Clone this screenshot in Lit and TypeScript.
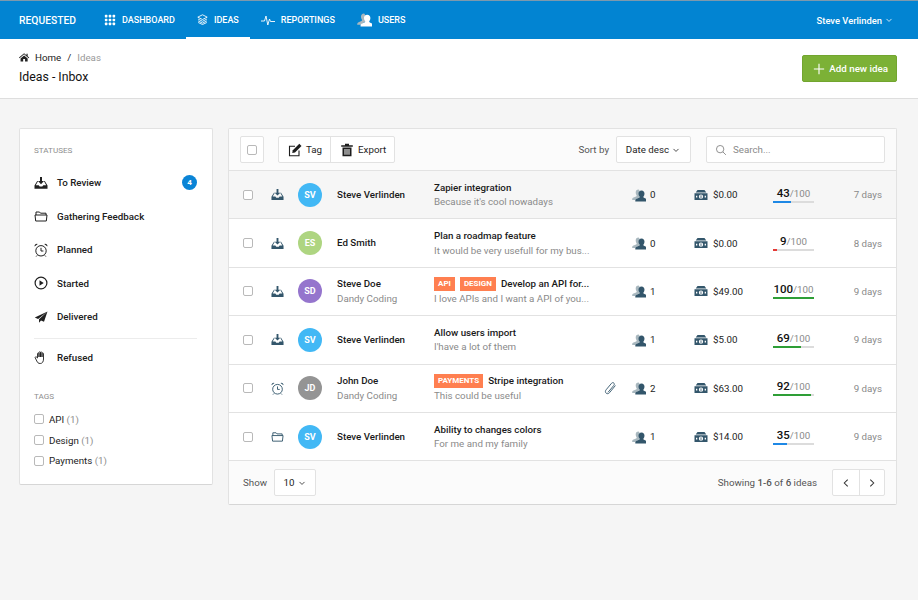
import { LitElement, css, html, svg } from "lit";
import { customElement } from "lit/decorators.js";

const icons = {
  grid: svg`<g fill="currentColor">${[1, 5.5, 10].flatMap((y) =>
    [1, 5.5, 10].map((x) => svg`<rect x=${x} y=${y} width="3" height="3" rx=".8" />`)
  )}</g>`,
  layers: svg`<g fill="none" stroke="currentColor" stroke-width="1.1"><path d="M7 1 13 4 7 7 1 4Z" /><path d="M1.5 6.5 7 9.3l5.500-2.800" /><path d="M1.500 8.800 7 11.600l5.500-2.800" /><path d="M1.500 10.800 7 13.400l5.500-2.600" /></g>`,
  pulse: svg`<path fill="none" stroke="currentColor" stroke-width=".9" d="M0 8h3.500l1.500-5 1.800 9 1.700-6 1 2.500H14" />`,
  user: svg`<path fill="#a9b8bf" d="M6.500 1.500c-1.800 0-2.800 1.200-2.800 3 0 1 .3 2 .9 2.700.2.400 0 1-.5 1.200L1 9.800c-.5.300-.8.800-.8 1.500V12h4.300l1-1.600 2-1.200V2.600c-.3-.7-.8-1.100-1-1.100Z" /><path fill="currentColor" d="M9.500 2.500c-1.900 0-3 1.300-3 3.200 0 1.100.4 2.100 1 2.800.3.500.1 1.100-.5 1.300l-2.700 1.200c-.7.300-1 .9-1 1.500V13.500h12.400v-1c0-.6-.3-1.200-1-1.500L12 9.800c-.6-.2-.8-.8-.5-1.300.6-.7 1-1.700 1-2.800 0-1.900-1.100-3.200-3-3.200Z" />`,
  home: svg`<path fill="currentColor" d="M6.500 1.500 0 7l.7.800L6.500 3l5.800 4.800L13 7l-2-1.700V2.300H9.500v1.700ZM2 8.200V12h3.300V9h2.400v3H11V8.200L6.500 4.400Z" />`,
  inbox: svg`<path fill="currentColor" d="M6 1h2v4h2L7 8.200 4 5h2Z" /><path fill="currentColor" d="M3.200 5h.9L1.800 9.200h2.900l1 1.400h2.600l1-1.400h2.900L9.900 5h.9l2.700 4.400V12.800H.5V9.400Z" />`,
  folder: svg`<path fill="none" stroke="currentColor" stroke-width="1" d="M2 6V3h3.500l1 1.200H12V6M1 6h12l-.7 6H1.700Z" />`,
  clock: svg`<g fill="none" stroke="currentColor" stroke-width="1"><circle cx="7" cy="7.800" r="5.200" /><path d="M7 4.800v3.200h2.400M3.200 12.400l-1 1.100M10.800 12.400l1 1.100" /></g><path fill="currentColor" d="M.6 3.600A2.300 2.300 0 0 1 3.800 1ZM13.400 3.600A2.300 2.300 0 0 0 10.200 1Z" />`,
  play: svg`<circle cx="7" cy="7" r="5.900" fill="none" stroke="currentColor" stroke-width="1.200" /><path fill="currentColor" d="M5.500 4.300 9.700 7l-4.200 2.700Z" />`,
  plane: svg`<path fill="currentColor" d="M13.500 1.500 .8 7.600l3.300 1.300ZM13.500 1.500 5 9.300v3.500l2-2.300 3 1.300Z" />`,
  hand: svg`<path fill="none" stroke="currentColor" stroke-width=".9" stroke-linejoin="round" d="M3.500 8V3.500a.8.800 0 0 1 1.500 0V7 2.300a.8.800 0 0 1 1.500 0V7 2.500a.8.800 0 0 1 1.500 0V7 3.500a.8.800 0 0 1 1.500 0V9c0 2.500-1 4.500-3.300 4.500-2 0-2.700-1-3.400-2.500L1.200 7.800c-.3-.9.800-1.400 1.300-.7Z" />`,
  clip: svg`<path fill="none" stroke="currentColor" stroke-width=".9" stroke-linecap="round" d="M5.200 12.600 10.900 5.800c1.400-1.700-.9-3.800-2.400-2L3.100 10.300c-2.200 2.700 1.300 5.400 3.400 2.900l5.700-6.900" transform="translate(0 -1.500)" />`,
  money: svg`<path fill="currentColor" d="M3.500 2h7l1.800 2.400H1.700ZM.5 5.200h13V12H.5ZM7 6.500a2 2 0 1 0 0 4.300 2 2 0 0 0 0-4.300ZM2 7.800v1.700h1.300V7.800ZM10.700 7.800v1.700H12V7.800Z" fill-rule="evenodd" /><path fill="currentColor" d="M6.600 7.200h.8v3h-.8Z" />`,
  edit: svg`<path fill="none" stroke="currentColor" stroke-width="1.100" d="M11 7.500V12.800H1.500V3.200H7" /><path fill="currentColor" d="M11.300 .8 13.500 3 7 9.500l-2.800.6.600-2.800Z" />`,
  trash: svg`<path fill="currentColor" d="M5 .8h4v1.400h3.800v1.600H1.200V2.200H5ZM2.500 4.600h9V13.200h-9ZM4.500 6v5.800h1V6ZM6.500 6v5.800h1V6ZM8.500 6v5.800h1V6Z" fill-rule="evenodd" />`,
  search: svg`<circle cx="6" cy="6" r="4.300" fill="none" stroke="currentColor" stroke-width="1.100" /><path stroke="currentColor" stroke-width="1.100" d="m9.200 9.200 3.500 3.500" />`,
  plus: svg`<path stroke="currentColor" stroke-width="1.300" d="M7 1v12M1 7h12" />`,
  down: svg`<path fill="none" stroke="currentColor" stroke-width="1.100" d="M3.500 5.500 7 9l3.500-3.500" />`,
  left: svg`<path fill="none" stroke="currentColor" stroke-width="1.200" d="M9 3 5 7l4 4" />`,
  right: svg`<path fill="none" stroke="currentColor" stroke-width="1.200" d="m5 3 4 4-4 4" />`,
};

type IconName = keyof typeof icons;

function icon(name: IconName, size = 14) {
  return html`<svg class="icon" width=${size} height=${size} viewBox="0 0 14 14">${icons[name]}</svg>`;
}

const navItems: { label: string; icon: IconName; size: number; active?: boolean }[] = [
  { label: "DASHBOARD", icon: "grid", size: 12 },
  { label: "IDEAS", icon: "layers", size: 11, active: true },
  { label: "REPORTINGS", icon: "pulse", size: 14 },
  { label: "USERS", icon: "user", size: 15 },
];

const statuses: { label: string; icon: IconName; count?: number }[] = [
  { label: "To Review", icon: "inbox", count: 4 },
  { label: "Gathering Feedback", icon: "folder" },
  { label: "Planned", icon: "clock" },
  { label: "Started", icon: "play" },
  { label: "Delivered", icon: "plane" },
];

const tags = ["API", "Design", "Payments"];

interface Idea {
  status: IconName;
  initials: string;
  color: string;
  name: string;
  company?: string;
  tags?: string[];
  title: string;
  text: string;
  clip?: boolean;
  voters: number;
  amount: string;
  score: number;
  barColor: string;
  age: string;
  hover?: boolean;
}

const ideas: Idea[] = [
  { status: "inbox", initials: "SV", color: "#42b8f5", name: "Steve Verlinden", title: "Zapier integration", text: "Because it's cool nowadays", voters: 0, amount: "$0.00", score: 43, barColor: "#1e88e5", age: "7 days", hover: true },
  { status: "inbox", initials: "ES", color: "#aed581", name: "Ed Smith", title: "Plan a roadmap feature", text: "It would be very usefull for my bus...", voters: 0, amount: "$0.00", score: 9, barColor: "#e53935", age: "8 days" },
  { status: "inbox", initials: "SD", color: "#9575cd", name: "Steve Doe", company: "Dandy Coding", tags: ["API", "DESIGN"], title: "Develop an API for...", text: "I love APIs and I want a API of you...", voters: 1, amount: "$49.00", score: 100, barColor: "#2e9e36", age: "9 days" },
  { status: "inbox", initials: "SV", color: "#42b8f5", name: "Steve Verlinden", title: "Allow users import", text: "I'have a lot of them", voters: 1, amount: "$5.00", score: 69, barColor: "#2e9e36", age: "9 days" },
  { status: "clock", initials: "JD", color: "#949494", name: "John Doe", company: "Dandy Coding", tags: ["PAYMENTS"], title: "Stripe integration", text: "This could be useful", clip: true, voters: 2, amount: "$63.00", score: 92, barColor: "#2e9e36", age: "9 days" },
  { status: "folder", initials: "SV", color: "#42b8f5", name: "Steve Verlinden", title: "Ability to changes colors", text: "For me and my family", voters: 1, amount: "$14.00", score: 35, barColor: "#1e88e5", age: "9 days" },
];

@customElement("app-root")
export class AppRoot extends LitElement {
  static styles = css`
    * {
      box-sizing: border-box;
    }

    :host {
      display: block;
      min-height: 600px;
      background: #f5f5f5;
      color: #1d1d1d;
      font-family: Roboto, sans-serif;
      font-size: 9.750px;
    }

    .icon {
      display: block;
      flex: none;
    }

    .topbar {
      display: flex;
      align-items: center;
      height: 39px;
      padding: 0 24px 0 19px;
      background: #0284d2;
      border-top: 1px solid #7d99ad;
      color: #fff;
    }

    .brand {
      width: 62px;
      font-size: 10.300px;
      font-weight: 500;
    }

    .nav {
      display: flex;
      align-self: stretch;
      flex: 1;
      margin-left: 12px;
    }

    .nav a {
      display: flex;
      align-items: center;
      gap: 6px;
      padding: 0 11px;
      font-size: 9px;
      font-weight: 500;
    }

    .nav a.active {
      border-bottom: 2px solid #fff;
      padding-top: 2px;
    }

    .nav a .icon {
      margin-top: -1px;
    }

    .account {
      display: flex;
      align-items: center;
      gap: 2px;
      font-size: 9.400px;
      font-weight: 500;
    }

    .pagehead {
      display: flex;
      justify-content: space-between;
      align-items: center;
      height: 60px;
      padding: 0 21px 0 19px;
      background: #fff;
      border-bottom: 1px solid #dedede;
    }

    .crumbs {
      display: flex;
      align-items: center;
      gap: 4px;
      color: #222;
    }

    .crumbs .icon {
      margin-right: 1px;
    }

    .crumbs .sep {
      margin: 0 2px;
    }

    .crumbs .now {
      color: #999;
    }

    h1 {
      margin: 6px 0 0;
      font-size: 12.300px;
      line-height: 16px;
      font-weight: 400;
      color: #111;
    }

    .add {
      display: flex;
      align-items: center;
      gap: 4px;
      height: 27px;
      padding: 0 8px 0 10px;
      background: #7cb136;
      border: 1px solid #72a52f;
      border-radius: 2px;
      color: #fff;
      font-weight: 500;
    }

    .add .icon {
      width: 12px;
      height: 12px;
    }

    .content {
      display: flex;
      align-items: flex-start;
      gap: 15px;
      padding: 29px 21px 0 19px;
    }

    .card {
      background: #fff;
      border: 1px solid #e2e2e2;
      border-bottom-color: #d6d6d6;
      border-radius: 2px;
    }

    .side {
      width: 194px;
      height: 357px;
      padding: 16px 15px 0 14px;
    }

    .side h4 {
      margin: 0;
      font-size: 8.100px;
      line-height: 10px;
      font-weight: 400;
      color: #8d8d8d;
    }

    .status {
      display: flex;
      align-items: center;
      height: 33.500px;
      font-weight: 500;
      color: #202020;
    }

    .status .icon {
      margin-right: 9px;
      width: 14px;
    }

    .status span {
      flex: 1;
    }

    .statuses {
      margin-top: 11px;
    }

    .count {
      display: grid;
      place-items: center;
      flex: none;
      width: 15px;
      height: 15px;
      border-radius: 50%;
      background: #0a84d6;
      color: #fff;
      font-size: 8px;
      font-weight: 700;
    }

    .rule {
      margin-top: 4px;
      border-top: 1px solid #ececec;
    }

    .refused {
      margin-top: 2px;
    }

    .side .tags-head {
      margin-top: 17px;
    }

    .tag-opts {
      margin-top: 8px;
    }

    .tag-opt {
      display: flex;
      align-items: center;
      gap: 5px;
      height: 20.700px;
      color: #222;
    }

    .tag-opt em {
      font-style: normal;
      color: #8d8d8d;
    }

    .box {
      flex: none;
      width: 10px;
      height: 10px;
      background: #fff;
      border: 1px solid #b9b9b9;
      border-radius: 2px;
    }

    .main {
      display: flex;
      flex-direction: column;
      flex: 1;
      height: 377px;
    }

    .toolbar {
      display: flex;
      align-items: center;
      flex: none;
      height: 42px;
      padding: 0 11px;
      background: #fbfbfb;
      border-bottom: 1px solid #e2e2e2;
    }

    .btn {
      display: flex;
      align-items: center;
      height: 27px;
      background: #fff;
      border: 1px solid #e2e2e2;
      border-radius: 2px;
    }

    .select-all {
      justify-content: center;
      width: 24px;
      margin-right: 14px;
    }

    .group .part {
      display: flex;
      align-items: center;
      gap: 4px;
      height: 100%;
      padding: 0 8px 0 9px;
    }

    .group .part + .part {
      border-left: 1px solid #e2e2e2;
    }

    .sort-label {
      margin-left: auto;
      margin-right: 7px;
      color: #555;
    }

    .sort {
      justify-content: center;
      gap: 2px;
      width: 75px;
      margin-right: 15px;
    }

    .search {
      gap: 6px;
      width: 179px;
      padding-left: 8px;
      color: #8a8a8a;
    }

    .row {
      display: grid;
      flex: none;
      grid-template-columns: 28px 27px 39px 97px 169px 29px 62px 79px 1fr;
      align-items: center;
      height: 48.400px;
      padding: 0 14px;
      border-bottom: 1px solid #e2e2e2;
    }

    .row.hover {
      background: #f6f6f6;
    }

    .state {
      color: #33566b;
    }

    .avatar {
      display: grid;
      place-items: center;
      width: 24px;
      height: 24px;
      border-radius: 50%;
      color: #fff;
      font-size: 9px;
      font-weight: 700;
    }

    .name {
      line-height: 12px;
      font-weight: 500;
      color: #1a1a1a;
    }

    .sub {
      margin-top: 3px;
      line-height: 12px;
      color: #8a8a8a;
      font-weight: 400;
      white-space: nowrap;
    }

    .title {
      display: flex;
      align-items: center;
      height: 12px;
      font-weight: 500;
      color: #1a1a1a;
      white-space: nowrap;
    }

    .pill {
      margin-right: 5px;
      padding: 0 4px;
      height: 14px;
      line-height: 14px;
      background: #ff7f50;
      color: #fff;
      font-size: 8px;
      font-weight: 700;
    }

    .clip,
    .voters,
    .money {
      color: #33566b;
    }

    .voters,
    .money {
      display: flex;
      align-items: center;
      gap: 4px;
    }

    .money {
      gap: 5px;
    }

    .voters span,
    .money span {
      color: #222;
    }

    .score {
      display: grid;
      grid-template-columns: 41px 1fr;
      align-items: center;
    }

    .points {
      text-align: center;
      line-height: 13px;
      color: #8a8a8a;
    }

    .points b {
      font-size: 11.500px;
      font-weight: 500;
      color: #111;
    }

    .track {
      height: 2px;
      margin-top: 1px;
      background: #dcdcdc;
    }

    .track div {
      height: 100%;
    }

    .age {
      text-align: right;
      color: #8a8a8a;
    }

    .footer {
      display: flex;
      align-items: center;
      flex: 1;
      padding: 0 11px 0 14px;
      background: #fbfbfb;
      color: #555;
    }

    .limit {
      justify-content: center;
      gap: 2px;
      width: 42px;
      margin-left: 7px;
      color: #222;
    }

    .range {
      margin-left: auto;
      margin-right: 15px;
    }

    .range b {
      font-weight: 500;
    }

    .pager .part {
      width: 25.500px;
      padding: 0;
      justify-content: center;
      color: #333;
    }
  `;

  render() {
    return html`
      <header class="topbar">
        <div class="brand">REQUESTED</div>
        <nav class="nav">
          ${navItems.map(
            (item) => html`<a class=${item.active ? "active" : ""}>${icon(item.icon, item.size)}${item.label}</a>`
          )}
        </nav>
        <div class="account">Steve Verlinden ${icon("down", 10)}</div>
      </header>
      <section class="pagehead">
        <div>
          <div class="crumbs">${icon("home", 11)}<span>Home</span><span class="sep">/</span><span class="now">Ideas</span></div>
          <h1>Ideas - Inbox</h1>
        </div>
        <div class="add">${icon("plus")}Add new idea</div>
      </section>
      <div class="content">
        <aside class="card side">
          <h4>STATUSES</h4>
          <div class="statuses">
            ${statuses.map(
              (item) => html`<div class="status">
                ${icon(item.icon)}<span>${item.label}</span>
                ${item.count ? html`<div class="count">${item.count}</div>` : ""}
              </div>`
            )}
          </div>
          <div class="rule"></div>
          <div class="status refused">${icon("hand")}<span>Refused</span></div>
          <h4 class="tags-head">TAGS</h4>
          <div class="tag-opts">
            ${tags.map((t) => html`<div class="tag-opt"><div class="box"></div><span>${t} <em>(1)</em></span></div>`)}
          </div>
        </aside>
        <main class="card main">
          <div class="toolbar">
            <div class="btn select-all"><div class="box"></div></div>
            <div class="btn group">
              <div class="part">${icon("edit")}Tag</div>
              <div class="part">${icon("trash")}Export</div>
            </div>
            <span class="sort-label">Sort by</span>
            <div class="btn sort">Date desc ${icon("down", 10)}</div>
            <div class="btn search">${icon("search", 12)}Search...</div>
          </div>
          ${ideas.map((idea) => this.renderRow(idea))}
          <div class="footer">
            Show
            <div class="btn limit">10 ${icon("down", 10)}</div>
            <span class="range">Showing <b>1-6</b> of <b>6</b> ideas</span>
            <div class="btn group pager">
              <div class="part">${icon("left", 12)}</div>
              <div class="part">${icon("right", 12)}</div>
            </div>
          </div>
        </main>
      </div>
    `;
  }

  private renderRow(idea: Idea) {
    return html`<div class="row ${idea.hover ? "hover" : ""}">
      <div class="box"></div>
      <div class="state">${icon(idea.status, 13)}</div>
      <div class="avatar" style="background:${idea.color}">${idea.initials}</div>
      <div>
        <div class="name">${idea.name}</div>
        ${idea.company ? html`<div class="sub">${idea.company}</div>` : ""}
      </div>
      <div>
        <div class="title">
          ${idea.tags?.map((t) => html`<span class="pill">${t}</span>`)}${idea.title}
        </div>
        <div class="sub">${idea.text}</div>
      </div>
      <div class="clip">${idea.clip ? icon("clip") : ""}</div>
      <div class="voters">${icon("user")}<span>${idea.voters}</span></div>
      <div class="money">${icon("money")}<span>${idea.amount}</span></div>
      <div class="score">
        <div>
          <div class="points"><b>${idea.score}</b>/100</div>
          <div class="track"><div style="width:${idea.score}%;background:${idea.barColor}"></div></div>
        </div>
        <div class="age">${idea.age}</div>
      </div>
    </div>`;
  }
}

declare global {
  interface HTMLElementTagNameMap {
    "app-root": AppRoot;
  }
}
